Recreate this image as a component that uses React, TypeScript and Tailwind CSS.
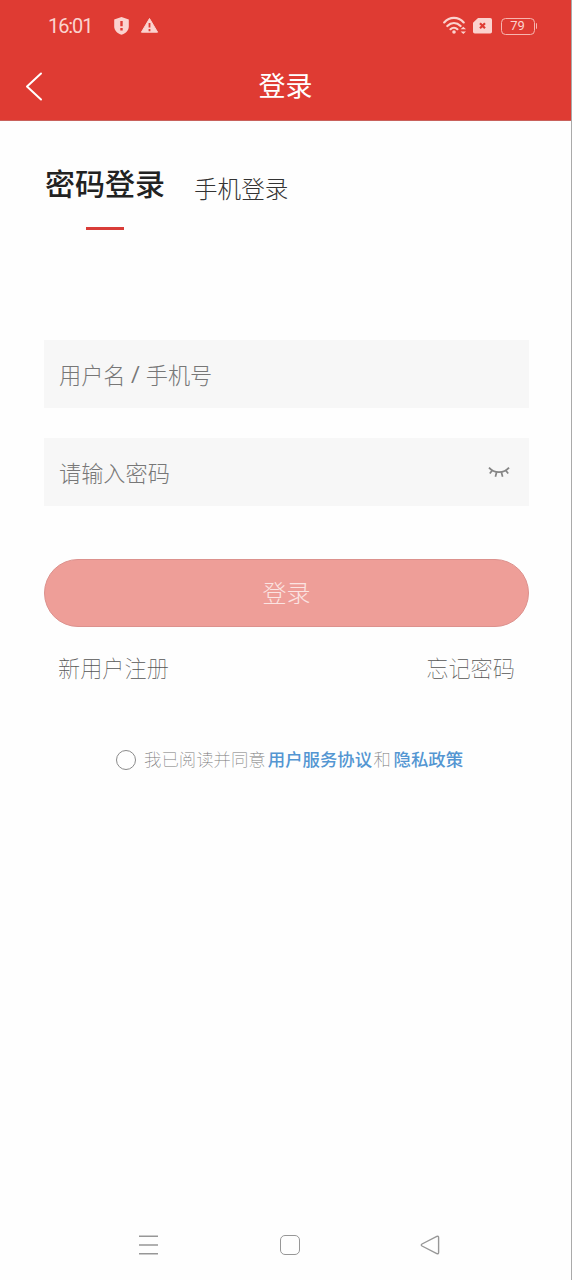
import React from 'react';

const StatusBar: React.FC = () => (
  <div className="flex h-[52px] items-center justify-between pl-12 pr-[34px] text-[#fbd3cf]">
    <div className="flex items-center">
      <span className="w-[65px] font-['Roboto','Noto_Sans_CJK_SC',sans-serif] text-[20px] leading-none tracking-[-1.1px]">16:01</span>
      <svg className="h-[18px] w-[17px]" viewBox="0 0 17 18">
        <path d="M8.5 0 L15.8 2.6 V9.5 C15.8 13.5 12.5 16.5 8.5 17.7 C4.5 16.5 1.2 13.5 1.2 9.5 V2.6 Z" fill="currentColor" />
        <path d="M8.5 4 V9.3 M8.5 11 V13.4" stroke="#df3b33" strokeWidth="2.4" />
      </svg>
      <svg className="ml-2.5 h-[18px] w-[19px]" viewBox="0 0 19 18">
        <path d="M9.5 1.5 L17.6 15.2 H1.4 Z" fill="currentColor" stroke="currentColor" strokeWidth="1" strokeLinejoin="round" />
        <path d="M9.5 6 V10.6 M9.5 12 V14.2" stroke="#df3b33" strokeWidth="1.8" />
      </svg>
    </div>
    <div className="flex items-center">
      <svg className="h-5 w-6" viewBox="0 0 24 20" fill="none" stroke="currentColor" strokeWidth="2.2" strokeLinecap="round">
        <path d="M1.2 6.4 C6.7 0.4 15.2 0.4 20.7 6.4" />
        <path d="M4.3 10 C8.3 6 13.6 6 17.6 10" />
        <path d="M7.5 13.2 C9.5 11.3 12.4 11.3 14.4 13.2" />
        <circle cx="11" cy="16" r="1.8" fill="currentColor" stroke="none" />
        <path d="M17.6 13.3 L20.3 10.7 L23 13.3 Z M17.6 15.4 L20.3 18 L23 15.4 Z" fill="currentColor" stroke="none" />
      </svg>
      <svg className="ml-[6px] h-4 w-[19px]" viewBox="0 0 19 16">
        <path d="M5 0 H17.2 Q19 0 19 1.8 V13.7 Q19 15.5 17.2 15.5 H1.8 Q0 15.5 0 13.7 V4.8 Z" fill="currentColor" />
        <path d="M7 5.2 L12 10.2 M12 5.2 L7 10.2" stroke="#df3b33" strokeWidth="2.2" />
      </svg>
      <div className="ml-[9px] flex h-[17px] w-[34px] items-center justify-center rounded-[4.5px] border-[1.5px] border-[#f7b5af] pb-px font-['Roboto',sans-serif] text-[13px] leading-none">
        79
      </div>
      <div className="ml-px h-[6px] w-[1.5px] rounded-r bg-[#f7b5af]" />
    </div>
  </div>
);

const Header: React.FC = () => (
  <header className="h-[121px] border-b border-[#c9615b] bg-[#df3b33]">
    <StatusBar />
    <div className="grid h-[68px] grid-cols-[60px_1fr_60px] items-center">
      <svg className="ml-6 h-[30px] w-5" viewBox="0 0 20 30" fill="none" stroke="white" strokeWidth="2" strokeLinecap="round" strokeLinejoin="round">
        <path d="M17 2.5 L3 15.5 L17 28.5" />
      </svg>
      <h1 className="pb-[2px] text-center text-[27px] leading-[40px] text-white">登录</h1>
    </div>
  </header>
);

const ClosedEye: React.FC = () => (
  <svg className="h-[14px] w-[22px]" viewBox="0 0 22 14" fill="none" stroke="#858585" strokeWidth="1.7">
    <path d="M1 2.6 C6 8.6 16 8.6 21 2.6" />
    <path d="M4.2 5.4 L1.8 8.6 M8.6 7.2 L7.4 11.8 M13.4 7.2 L14.6 11.8 M17.8 5.4 L20.2 8.6" />
  </svg>
);

const Agreement: React.FC = () => (
  <div className="mt-[63px] flex h-[26px] items-center pl-[72px] text-[17.4px] font-thin text-[#777]">
    <span className="mr-2 h-5 w-5 rounded-full border-[1.5px] border-[#8a8a8a]" />
    <div className="flex pb-[2px]">
      <span>我已阅读并同意</span>
      <a className="ml-[2px] font-medium text-[#5496d2]">用户服务协议</a>
      <span className="ml-[1.5px]">和</span>
      <a className="ml-[2.5px] font-medium text-[#5496d2]">隐私政策</a>
    </div>
  </div>
);

const NavBar: React.FC = () => (
  <nav className="flex h-[70px] items-center justify-between pl-[138px] pr-[131px]">
    <svg className="h-5 w-[21px]" viewBox="0 0 21 20" stroke="#979797" strokeWidth="1.5">
      <path d="M1 1.2 H20 M1 10 H20 M1 18.8 H20" />
    </svg>
    <div className="h-5 w-5 rounded-[5px] border-[1.5px] border-[#979797]" />
    <svg className="h-5 w-5" viewBox="0 0 20 20" fill="none" stroke="#979797" strokeWidth="1.4" strokeLinejoin="round">
      <path d="M2 9 L16.8 1.3 Q18.6 0.8 18.6 2.5 V17.5 Q18.6 19.2 16.8 18.7 L2 11 Q0.6 10 2 9 Z" />
    </svg>
  </nav>
);

export default function App() {
  return (
    <div className="flex h-[1280px] w-[572px] flex-col border-r border-[#aaa] bg-[#fefefe] font-['Noto_Sans_CJK_SC',sans-serif]">
      <Header />
      <main className="flex-1 pl-11 pr-[42px]">
        <div className="flex h-[109px] items-start">
          <div className="flex w-[150px] flex-col pl-px pt-[39px]">
            <span className="text-[30px] leading-[44px] font-medium text-[#222]">密码登录</span>
            <span className="mt-[23px] ml-[41px] h-[3px] w-[38px] bg-[#d93c38]" />
          </div>
          <span className="pt-[49px] text-[23.6px] leading-[36px] font-light text-[#333]">手机登录</span>
        </div>

        <div className="mt-[110px] flex h-[68px] items-center bg-[#f7f7f7] px-[15px] text-[22.2px] leading-[32px] font-light text-[#777]">
          用户名<span className="mx-[5.5px] font-['Roboto',sans-serif] font-normal">/</span>手机号
        </div>
        <div className="mt-[30px] flex h-[68px] items-center justify-between bg-[#f7f7f7] pl-[15px] pr-[19px] text-[22.2px] leading-[32px] font-light text-[#777]">
          <span>请输入密码</span>
          <ClosedEye />
        </div>

        <button className="mt-[53px] flex h-[68px] w-full items-center justify-center rounded-full border border-[#dc918d] bg-[#ee9e98] pb-[2px] text-[24px] font-light text-[#fbe4e2]">
          登录
        </button>

        <div className="mt-[24px] flex h-[33px] items-center justify-between px-[14px] text-[22.2px] font-thin text-[#555]">
          <a>新用户注册</a>
          <a>忘记密码</a>
        </div>

        <Agreement />
      </main>
      <NavBar />
    </div>
  );
}
